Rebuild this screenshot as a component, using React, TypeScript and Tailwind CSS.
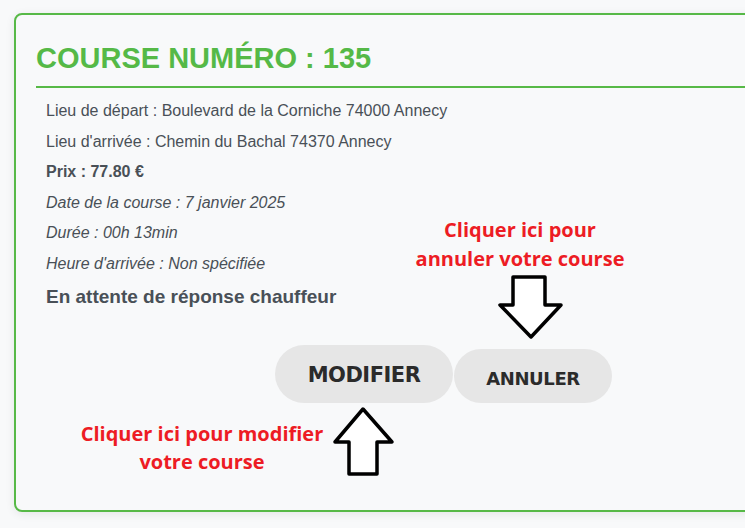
import React from "react";

const lines: { text: string; cls: string }[] = [
  { text: "Lieu de départ : Boulevard de la Corniche 74000 Annecy", cls: "" },
  { text: "Lieu d'arrivée : Chemin du Bachal 74370 Annecy", cls: "" },
  { text: "Prix : 77.80 €", cls: "font-bold" },
  { text: "Date de la course : 7 janvier 2025", cls: "italic" },
  { text: "Durée : 00h 13min", cls: "italic" },
  { text: "Heure d'arrivée : Non spécifiée", cls: "italic" },
];

export default function App() {
  return (
    <div className="relative w-[745px] h-[528px] overflow-hidden bg-[#f8f9fa] pt-[13px] pl-[14px] font-['Liberation_Sans',Arial,sans-serif]">
      <div className="w-[780px] h-[499px] border-2 border-[#57b947] rounded-lg bg-[#f8f9fa] shadow-[0_2px_10px_rgba(0,0,0,0.08)] pl-[20px] pt-[27px]">
        <h1 className="text-[29px] leading-[32px] font-bold text-[#55b947]">COURSE NUMÉRO : 135</h1>
        <div className="mt-[12px] h-[2px] bg-[#57b947]" />
        <div className="mt-[11px] pl-[10px] flex flex-col gap-[6.6px] text-[16px] leading-6 text-[#495057]">
          {lines.map((l) => (
            <p key={l.text} className={l.cls}>
              {l.text}
            </p>
          ))}
        </div>
        <p className="mt-[9px] pl-[10px] text-[19px] leading-6 font-bold text-[#495057]">
          En attente de réponse chauffeur
        </p>
        <div className="mt-[36px] ml-[239px] flex items-end gap-[1px] font-['DejaVu_Sans',Verdana,sans-serif] font-bold text-[#2b2b2b]">
          <button className="w-[178px] h-[58px] rounded-full bg-[#e6e6e6] text-[21px] tracking-[-0.5px] pt-[4px]">MODIFIER</button>
          <button className="w-[158px] h-[54px] rounded-full bg-[#e6e6e6] text-[18px] tracking-[-0.4px] pt-[5px]">ANNULER</button>
        </div>
      </div>

      <div className="absolute left-[400px] top-[215px] w-[240px] text-center text-[20px] leading-[29px] font-bold text-[#ed1c24] font-['Open_Sans',sans-serif]">
        Cliquer ici pour
        <br />
        annuler votre course
      </div>
      <div className="absolute left-[72px] top-[420px] w-[260px] text-center text-[20px] leading-[28px] font-bold text-[#ed1c24] font-['Open_Sans',sans-serif]">
        Cliquer ici pour modifier
        <br />
        votre course
      </div>

      <svg className="absolute inset-0 pointer-events-none" width="745" height="528" viewBox="0 0 745 528">
        <polygon
          points="513,277 545,277 545,305 561,305 531,337 500,305 513,305"
          fill="#ffffff"
          stroke="#000"
          strokeWidth="3.5"
          strokeLinejoin="round"
        />
        <polygon
          points="363,409 392,442 377,442 377,474 349,474 349,442 335,442"
          fill="#ffffff"
          stroke="#000"
          strokeWidth="3.5"
          strokeLinejoin="round"
        />
      </svg>
    </div>
  );
}
